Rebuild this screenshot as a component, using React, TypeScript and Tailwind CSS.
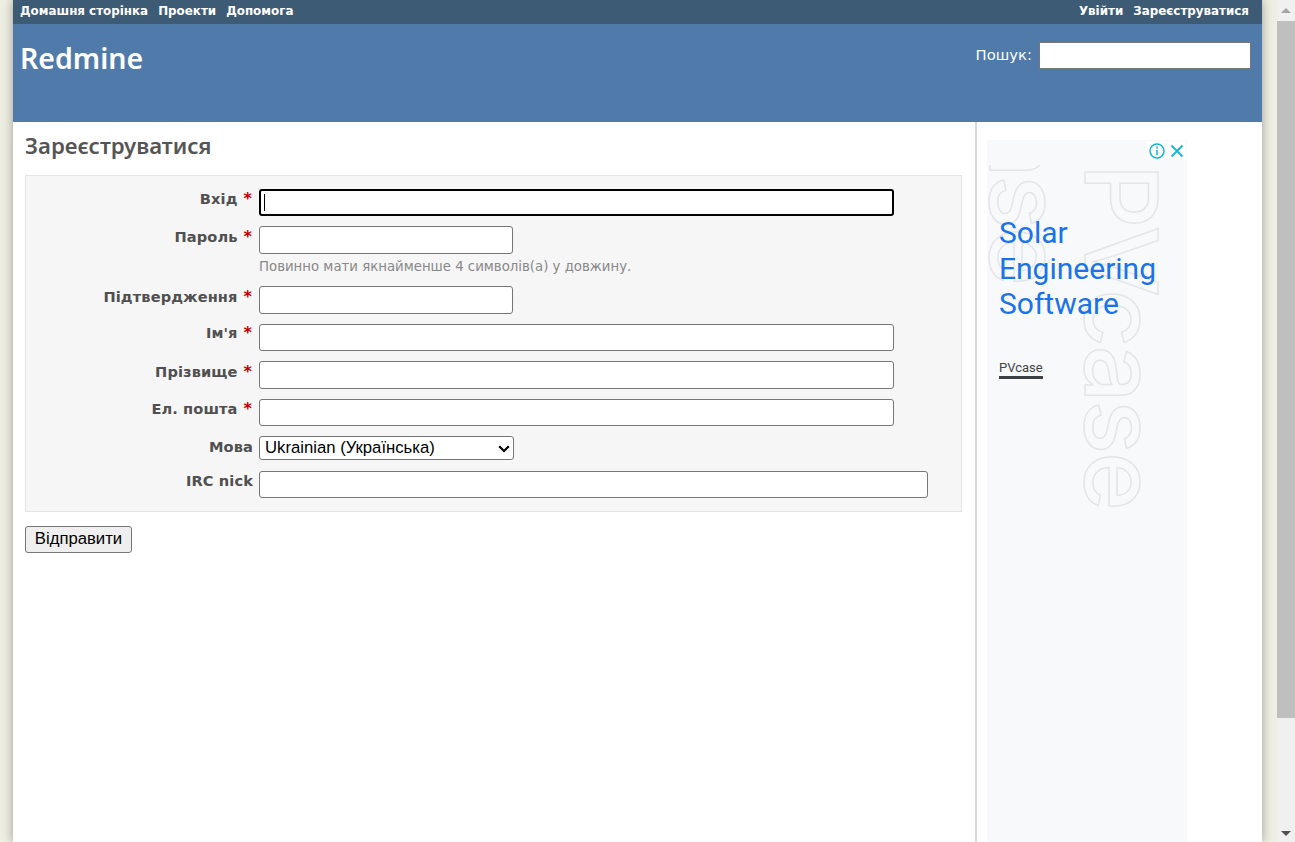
import React from "react";

const verdana = "font-['DejaVu_Sans',Verdana,sans-serif]";

function Row({ label, req, children, labelClass = "" }: { label: string; req?: boolean; children: React.ReactNode; labelClass?: string }) {
  return (
    <div className="flex items-start">
      <label className={`w-[233px] shrink-0 text-right pr-[6px] text-[14.6px] font-bold text-[#505050] leading-[16px] tracking-[0.1px] ${verdana} ${labelClass}`}>
        {label}
        {req && <span className="text-[#bb0000] ml-[6px] mr-[1px] text-[16px]">*</span>}
      </label>
      <div>{children}</div>
    </div>
  );
}

const inputCls = "block bg-white border border-[#767676] rounded-[3px] outline-none";

export default function App() {
  return (
    <div className="h-[842px] w-[1295px] overflow-hidden flex bg-[#eeeee2] font-['Liberation_Sans',Arial,sans-serif]">
      <div className="ml-[13px] w-[1249px] h-full bg-white flex flex-col shadow-[0_0_10px_rgba(0,0,0,0.35)]">
        <div className={`h-[24px] shrink-0 bg-[#3e5b76] flex justify-between items-center pl-[7px] pr-[13px] text-white font-bold text-[11.9px] ${verdana}`}>
          <div className="flex gap-[10px]">
            <span>Домашня сторінка</span>
            <span>Проекти</span>
            <span>Допомога</span>
          </div>
          <div className="flex gap-[10px]">
            <span>Увійти</span>
            <span>Зареєструватися</span>
          </div>
        </div>
        <div className="h-[98px] shrink-0 bg-[#507aaa] flex justify-between items-start pl-[7px] pr-[11px] text-white">
          <h1 className="mt-[16px] text-[28.5px] leading-[36px] font-semibold font-['Noto_Sans',sans-serif]">Redmine</h1>
          <div className="flex items-center mt-[18px] gap-[7px]">
            <span className="text-[14.8px] font-['DejaVu_Sans',sans-serif]">Пошук:</span>
            <div className="w-[212px] h-[27px] bg-white border border-[#767676]" />
          </div>
        </div>
        <div className="flex-1 flex min-h-0">
          <div className="w-[964px] shrink-0 border-r-2 border-[#d7d7d7] pl-[12px] pr-[13px]">
            <h2 className="mt-[10px] h-[28px] text-[22.2px] leading-[28px] font-semibold text-[#555555] font-['Noto_Sans',sans-serif]">Зареєструватися</h2>
            <div className="mt-[15px] h-[337px] bg-[#f6f6f6] border border-[#e4e4e4] pt-[13px]">
              <Row label="Вхід" req labelClass="pt-[2px]">
                <div className="relative w-[635px] h-[27px] bg-white border-2 border-black rounded-[3px]">
                  <div className="absolute left-[3px] top-[3px] w-px h-[17px] bg-black" />
                </div>
              </Row>
              <div className="h-[10px]" />
              <Row label="Пароль" req labelClass="pt-[3px]">
                <div className={`${inputCls} w-[254px] h-[28px]`} />
                <div className="mt-[3px] h-[20px] text-[13.3px] leading-[20px] text-[#888888] font-['DejaVu_Sans',sans-serif]">Повинно мати якнайменше 4 символів(а) у довжину.</div>
              </Row>
              <div className="h-[9px]" />
              <Row label="Підтвердження" req labelClass="pt-[3px]">
                <div className={`${inputCls} w-[254px] h-[28px]`} />
              </Row>
              <div className="h-[10px]" />
              <Row label="Ім'я" req labelClass="pt-[1px]">
                <div className={`${inputCls} w-[635px] h-[27px]`} />
              </Row>
              <div className="h-[10px]" />
              <Row label="Прізвище" req labelClass="pt-[3px]">
                <div className={`${inputCls} w-[635px] h-[28px]`} />
              </Row>
              <div className="h-[10px]" />
              <Row label="Ел. пошта" req labelClass="pt-[2px]">
                <div className={`${inputCls} w-[635px] h-[27px]`} />
              </Row>
              <div className="h-[10px]" />
              <Row label="Мова" labelClass="pt-[3px]">
                <div className="relative w-[255px] h-[24px] bg-white border border-[#767676] rounded-[3px] pl-[5px] text-[16.7px] leading-[21px] text-black">
                  Ukrainian (Українська)
                  <svg className="absolute right-[3px] top-[8px]" width="12" height="8" viewBox="0 0 12 8" fill="none">
                    <path d="M1.2 1.2L6 6L10.8 1.2" stroke="black" strokeWidth="2.2" />
                  </svg>
                </div>
              </Row>
              <div className="h-[11px]" />
              <Row label="IRC nick" labelClass="pt-[2px]">
                <div className={`${inputCls} w-[669px] h-[27px]`} />
              </Row>
            </div>
            <button className="mt-[14px] block w-[107px] h-[27px] bg-[#efefef] border border-[#767676] rounded-[3px] text-[16.7px] leading-[22px] pb-[2px] text-black text-center">Відправити</button>
          </div>
          <div className="flex-1 pl-[10px] pt-[18px]">
            <div className="relative w-[200px] h-[702px] bg-[#f8f9fb] overflow-hidden">
              <svg className="absolute inset-0" width="200" height="702" viewBox="0 0 200 702">
                <defs>
                  <clipPath id="adclip">
                    <rect x="0" y="25" width="200" height="677" />
                  </clipPath>
                </defs>
                <g clipPath="url(#adclip)">
                  <text transform="translate(98,24) rotate(90)" fontFamily="Inter, sans-serif" fontSize="100" fontWeight="500" letterSpacing="-2.2" fill="none" stroke="#e4e5e7" strokeWidth="1.5">PVcase</text>
                  <text transform="translate(3,-201) rotate(90)" fontFamily="Inter, sans-serif" fontSize="100" fontWeight="500" letterSpacing="-2.2" fill="none" stroke="#e4e5e7" strokeWidth="1.5">PVcase</text>
                </g>
              </svg>
              <div className="absolute right-[1px] top-[1px] flex gap-[1px]">
                <div className="w-[19px] h-[19px] bg-white flex items-center justify-center">
                  <svg width="16" height="16" viewBox="0 0 16 16" fill="none" stroke="#16b5d6" strokeWidth="1.5">
                    <circle cx="8" cy="8" r="7" />
                    <path d="M8 7v5M8 3.6v1.8" />
                  </svg>
                </div>
                <div className="w-[19px] h-[19px] bg-white flex items-center justify-center">
                  <svg width="14" height="14" viewBox="0 0 14 14" fill="none" stroke="#16b5d6" strokeWidth="1.8">
                    <path d="M1.5 1.5L12.5 12.5M12.5 1.5L1.5 12.5" />
                  </svg>
                </div>
              </div>
              <div className="absolute left-[12px] top-[75px] text-[30px] leading-[35.5px] text-[#1a73e8] font-['Roboto',sans-serif]">
                Solar<br />Engineering<br />Software
              </div>
              <div className="absolute left-[12px] top-[220px] h-[19px] border-b-[3px] border-[#3c4043] text-[13px] leading-[16px] text-[#444444] font-['Roboto',sans-serif]">PVcase</div>
            </div>
          </div>
        </div>
      </div>
      <div className="ml-auto w-[18px] h-full bg-[#f0f0f0] flex flex-col items-stretch">
        <div className="h-[21px] shrink-0 flex items-center justify-center">
          <div className="w-0 h-0 border-x-[5px] border-x-transparent border-b-[5px] border-b-[#a3a3a3]" />
        </div>
        <div className="h-[697px] shrink-0 bg-[#bfbfbf]" />
        <div className="flex-1 flex items-end justify-center pb-[6px]">
          <div className="w-0 h-0 border-x-[5px] border-x-transparent border-t-[5px] border-t-[#505050]" />
        </div>
      </div>
    </div>
  );
}
